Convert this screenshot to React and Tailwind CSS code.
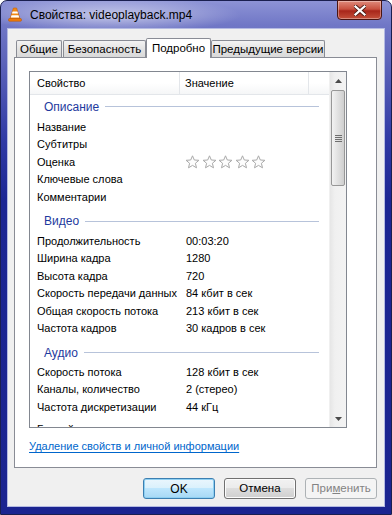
import React from "react";

const groups = [
  {
    title: "Описание",
    cls: "h-[23px]",
    rows: [
      ["Название", ""],
      ["Субтитры", ""],
      ["Оценка", "stars"],
      ["Ключевые слова", ""],
      ["Комментарии", ""],
    ],
  },
  {
    title: "Видео",
    cls: "h-[26px] pt-[5px]",
    rows: [
      ["Продолжительность", "00:03:20"],
      ["Ширина кадра", "1280"],
      ["Высота кадра", "720"],
      ["Скорость передачи данных", "84 кбит в сек"],
      ["Общая скорость потока", "213 кбит в сек"],
      ["Частота кадров", "30 кадров в сек"],
    ],
  },
  {
    title: "Аудио",
    cls: "h-[25.5px] pt-[5px]",
    rows: [
      ["Скорость потока", "128 кбит в сек"],
      ["Каналы, количество", "2 (стерео)"],
      ["Частота дискретизации", "44 кГц"],
      ["Битрейт", ""],
    ],
  },
];

const Star = () => (
  <svg width="15" height="14" viewBox="0 0 15 14">
    <path
      d="M7.5 0.8 L9.3 5 L13.9 5.3 L10.4 8.3 L11.5 12.8 L7.5 10.4 L3.5 12.8 L4.6 8.3 L1.1 5.3 L5.7 5 Z"
      fill="#fdfdfd"
      stroke="#a9a9a9"
      strokeWidth="1"
      strokeLinejoin="round"
    />
  </svg>
);

const Cone = () => (
  <svg width="14" height="15" viewBox="0 0 14 15">
    <path d="M5.4 1 L8.6 1 L12 12 L2 12 Z" fill="#f28a14" stroke="#c45f05" strokeWidth="0.6" />
    <path d="M4.6 4.4 L9.4 4.4 L10.1 6.6 L3.9 6.6 Z" fill="#fff" />
    <path d="M3.5 8.2 L10.5 8.2 L11.2 10.4 L2.8 10.4 Z" fill="#fff" />
    <rect x="0.6" y="11.6" width="12.8" height="2.6" rx="0.8" fill="#f07d0a" stroke="#b85505" strokeWidth="0.6" />
  </svg>
);

const Arrow = ({ up }) => (
  <svg width="7" height="4" viewBox="0 0 7 4">
    <path d={up ? "M0 4 L3.5 0 L7 4 Z" : "M0 0 L3.5 4 L7 0 Z"} fill="#4a4a4a" />
  </svg>
);

const Tab = ({ label, w, active }) =>
  active ? (
    <div className={`relative z-10 -mb-px h-[20px] ${w} border border-b-0 border-[#898c95] bg-white rounded-t-[2px] flex items-center justify-center text-[11.5px] whitespace-nowrap`}>
      {label}
    </div>
  ) : (
    <div className={`h-[17px] ${w} border border-b-0 border-[#898c95] bg-[linear-gradient(#f3f3f3,#e3e3e3_50%,#d9d9d9)] rounded-t-[2px] flex items-center justify-center pt-[1px] whitespace-nowrap`}>
      {label}
    </div>
  );

export default function App() {
  return (
    <div className="w-[392px] h-[515px] overflow-hidden font-['Liberation_Sans',sans-serif] text-[11px] text-black">
      <div className="w-full h-full flex flex-col rounded-t-[7px] border border-[#1a1f50] bg-[linear-gradient(180deg,#8d93d6_0px,#7077c6_24px,#5d64ba_60px,#2f39a4_140px,#1c2693_200px,#1b2490_100%)]">
        {/* title bar */}
        <div className="h-[27px] flex items-start pl-[7px] pr-[9px] bg-[radial-gradient(ellipse_130px_18px_at_110px_14px,rgba(255,255,255,0.55),rgba(255,255,255,0))]">
          <div className="mt-[6px]">
            <Cone />
          </div>
          <span className="ml-[8px] mt-[6px] leading-[16px] text-[12px]">Свойства: videoplayback.mp4</span>
          <div className="ml-auto -mt-px w-[45px] h-[20px] rounded-b-[4px] border border-[#4a1410] bg-[linear-gradient(#e08b7c,#c9513f_45%,#a8261a_55%,#c4503a)] flex items-center justify-center shadow-[inset_0_0_0_1px_rgba(255,255,255,0.35)]">
            <svg width="12" height="11" viewBox="0 0 12 11">
              <path d="M1.5 1.5 L10.5 9.5 M10.5 1.5 L1.5 9.5" stroke="#4a1a14" strokeWidth="4" strokeLinecap="square" />
              <path d="M1.5 1.5 L10.5 9.5 M10.5 1.5 L1.5 9.5" stroke="#fff" strokeWidth="2.2" strokeLinecap="square" />
            </svg>
          </div>
        </div>

        {/* client */}
        <div className="ml-[6px] w-[378px] h-[479px] border border-[#b4bae2] bg-[#f0f0f0] flex flex-col">
          <div className="flex items-end ml-[8px] mt-[9px] text-[11.5px]">
            <Tab label="Общие" w="w-[46px]" />
            <div className="w-[1px]" />
            <Tab label="Безопасность" w="w-[83px]" />
            <Tab label="Подробно" w="w-[65px]" active />
            <Tab label="Предыдущие версии" w="w-[114px]" />
          </div>

          {/* panel */}
          <div className="ml-[6px] w-[363px] h-[411px] border border-[#898c95] bg-white flex flex-col">
            <div className="ml-[14px] mt-[13px] w-[318px] h-[357px] border border-[#828790] flex overflow-hidden">
              <div className="flex-1 flex flex-col overflow-hidden">
                <div className="h-[23px] shrink-0 flex border-b border-[#e3e6ea] bg-[linear-gradient(#ffffff,#ffffff_50%,#f5f6f7)]">
                  <div className="w-[150px] pl-[7px] flex items-center border-r border-[#e3e6ea]">Свойство</div>
                  <div className="w-[129px] pl-[5px] flex items-center border-r border-[#e3e6ea]">Значение</div>
                  <div className="flex-1" />
                </div>
                {groups.map((g) => (
                  <div key={g.title}>
                    <div className={`${g.cls} flex items-center pl-[14px] pr-[10px] text-[12px]`}>
                      <span className="text-[#1e3a9e]">{g.title}</span>
                      <div className="flex-1 ml-[6px] h-px bg-[#b7c3da]" />
                    </div>
                    {g.rows.map(([k, v]) => (
                      <div
                        key={k}
                        className={`h-[17.6px] flex items-center whitespace-nowrap ${k === "Битрейт" ? "mt-[5px]" : ""}`}
                      >
                        <span className="w-[156px] pl-[7px] overflow-hidden">{k}</span>
                        {v === "stars" ? (
                          <span className="flex gap-[1.5px] -ml-[1px]">
                            <Star />
                            <Star />
                            <Star />
                            <Star />
                            <Star />
                          </span>
                        ) : (
                          <span>{v}</span>
                        )}
                      </div>
                    ))}
                  </div>
                ))}
              </div>

              {/* scrollbar */}
              <div className="w-[17px] shrink-0 flex flex-col bg-[linear-gradient(90deg,#e6e6e6,#f0f0f0_30%,#f3f3f3)] border-l border-[#f0f0f0]">
                <div className="h-[17px] flex items-center justify-center">
                  <Arrow up />
                </div>
                <div className="mx-[1px] mt-[1px] h-[96px] rounded-[2px] border border-[#979797] bg-[linear-gradient(90deg,#f2f2f2,#e0e0e0_50%,#cfcfcf)] flex flex-col items-center justify-center gap-[1px]">
                  <div className="w-[7px] h-px bg-[#6e6e6e]" />
                  <div className="w-[7px] h-px bg-[#6e6e6e]" />
                  <div className="w-[7px] h-px bg-[#6e6e6e]" />
                  <div className="w-[7px] h-px bg-[#6e6e6e]" />
                </div>
                <div className="flex-1" />
                <div className="h-[17px] flex items-center justify-center">
                  <Arrow />
                </div>
              </div>
            </div>

            <div className="ml-[14px] mt-[11px] leading-[15px]">
              <span className="text-[#0066cc] underline underline-offset-[2px]">Удаление свойств и личной информации</span>
            </div>
          </div>

          {/* buttons */}
          <div className="flex justify-end gap-[9px] mt-[10px] pr-[7px] text-[12px]">
            <div className="w-[72px] h-[21px] rounded-[3px] border border-[#3c7fb1] bg-[linear-gradient(#eaf6fd,#d9f0fc_50%,#bee6fd_50%,#a7d9f5)] shadow-[inset_0_0_0_1px_#8fd0f2] flex items-center justify-center">
              OK
            </div>
            <div className="w-[72px] h-[21px] rounded-[3px] border border-[#707070] bg-[linear-gradient(#f2f2f2,#ebebeb_50%,#dddddd_50%,#cfcfcf)] shadow-[inset_0_0_0_1px_#fcfcfc] flex items-center justify-center text-[11.5px]">
              Отмена
            </div>
            <div className="w-[72px] h-[21px] rounded-[3px] border border-[#adb2b5] bg-[#f4f4f4] text-[#838383] flex items-center justify-center text-[11.5px]">
              При<span className="underline">м</span>енить
            </div>
          </div>
        </div>
      </div>
    </div>
  );
}
